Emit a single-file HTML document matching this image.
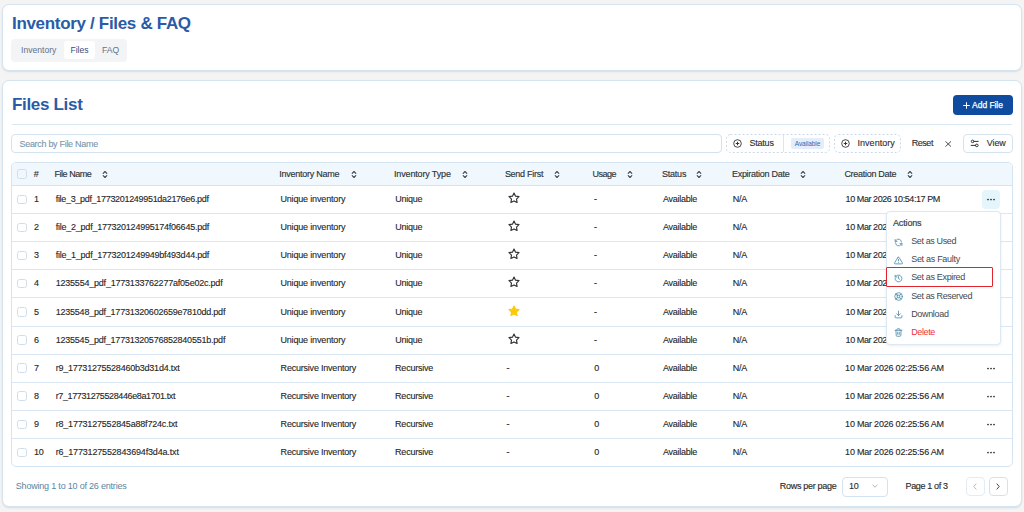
<!DOCTYPE html>
<html><head><meta charset="utf-8">
<style>
*{box-sizing:border-box;margin:0;padding:0}
html,body{width:1024px;height:512px;overflow:hidden;background:#f4f4f4;font-family:"Liberation Sans",sans-serif;color:#2b2b2b}
.abs{position:absolute}
.card{position:absolute;left:2px;width:1020px;background:#fff;border:1px solid #d4e4f1;border-radius:7px;box-shadow:0 1px 2px rgba(0,0,0,.1)}
.title{position:absolute;left:12px;font-weight:bold;color:#2a5ba7;font-size:17px;letter-spacing:-0.32px;white-space:nowrap}
.tabs{position:absolute;left:11px;top:39px;width:116px;height:23px;background:#f2f4f6;border-radius:4px}
.tab{position:absolute;top:2px;height:18px;line-height:18px;font-size:8.6px;color:#5f7386;white-space:nowrap}
.tab.on{background:#fff;color:#2e4f86;border-radius:3px;text-align:center}
.t9{font-size:9px;letter-spacing:-0.15px;white-space:nowrap;-webkit-text-stroke:0.1px currentColor}
.sep{position:absolute;left:12px;width:1000px;height:1px;background:#d9e7f3}
.btn-add{position:absolute;left:953px;top:95px;width:60px;height:20px;background:#0f4c9f;border-radius:4px;color:#fff;font-size:9px;font-weight:bold;line-height:21px;text-align:center;letter-spacing:-0.2px}
.input{position:absolute;left:11px;top:134px;width:711px;height:19px;border:1px solid #d3e2ef;border-radius:4px}
.dash{position:absolute;top:134px;height:19px;border:1px dashed #cfdeeb;border-radius:4px}
.table{position:absolute;left:11px;top:162px;width:1002px;height:305px;border:1px solid #d3e5f3;border-radius:5px;overflow:hidden}
.thead{position:absolute;left:0;top:0;width:100%;height:23px;background:#f0f8fd;border-bottom:1px solid #d3e5f3}
.row{position:absolute;left:0;width:100%;height:28px;border-bottom:1px solid #d9e8f4}
.cell{position:absolute;top:0;line-height:27.4px;font-size:9px;letter-spacing:-0.15px;white-space:nowrap;color:#262626;-webkit-text-stroke:0.12px #262626}
.th{position:absolute;top:0;line-height:23px;font-size:9px;letter-spacing:-0.2px;white-space:nowrap;color:#2d3338;-webkit-text-stroke:0.15px #2d3338}
.cb{position:absolute;width:9.5px;height:9.5px;border:1px solid #cfdeeb;border-radius:2.5px;background:transparent}
.sort{position:absolute;top:7px;width:6px;height:9px}
</style></head><body>

<div class="card" style="top:4px;height:67px">
</div>
<div class="title" style="top:14px">Inventory / Files &amp; FAQ</div>
<div class="tabs">
  <div class="tab" style="left:10px">Inventory</div>
  <div class="tab on" style="left:53px;width:31px">Files</div>
  <div class="tab" style="left:91px">FAQ</div>
</div>

<div class="card" style="top:80px;height:427px"></div>
<div class="title" style="top:95px">Files List</div>
<div class="btn-add"></div>
<svg class="abs" style="left:962.5px;top:101.5px" width="7" height="7" viewBox="0 0 7 7"><path d="M3.5 0.6v5.8M0.6 3.5h5.8" stroke="#fff" stroke-width="1" stroke-linecap="round"/></svg>
<div class="abs" style="left:972.1px;top:98px;line-height:14px;font-size:8.5px;color:#fff;-webkit-text-stroke:0.25px #fff;letter-spacing:-0.05px;white-space:nowrap">Add File</div>
<div class="sep" style="top:124px"></div>

<div class="input"><div class="abs t9" style="left:7.5px;top:0.5px;line-height:17px;color:#7896ab;letter-spacing:-0.3px">Search by File Name</div></div>

<svg class="abs" style="left:726px;top:134px" width="104" height="19"><rect x="0.5" y="0.5" width="103" height="18" rx="4" fill="none" stroke="#c9dbea" stroke-width="1" stroke-dasharray="2 2"/></svg>
<svg class="abs" style="left:733px;top:139px" width="9" height="9" viewBox="0 0 18 18"><circle cx="9" cy="9" r="7.6" fill="none" stroke="#333" stroke-width="1.8"/><path d="M9 6.3v5.4M6.3 9h5.4" stroke="#333" stroke-width="2" stroke-linecap="round"/></svg>
<div class="abs t9" style="left:749.4px;top:134px;line-height:19px;color:#2b2b2b;letter-spacing:-0.2px">Status</div>
<div class="abs" style="left:783px;top:135px;width:1px;height:17px;background:#dbe6ef"></div>
<div class="abs" style="left:791px;top:138px;width:33px;height:11px;background:#e4edf9;border-radius:2px;color:#3b66b0;font-size:6.5px;line-height:11px;text-align:center;letter-spacing:-0.1px">Available</div>
<svg class="abs" style="left:834px;top:134px" width="67" height="19"><rect x="0.5" y="0.5" width="66" height="18" rx="4" fill="none" stroke="#c9dbea" stroke-width="1" stroke-dasharray="2 2"/></svg>
<svg class="abs" style="left:841px;top:139px" width="9" height="9" viewBox="0 0 18 18"><circle cx="9" cy="9" r="7.6" fill="none" stroke="#333" stroke-width="1.8"/><path d="M9 6.3v5.4M6.3 9h5.4" stroke="#333" stroke-width="2" stroke-linecap="round"/></svg>
<div class="abs t9" style="left:857.5px;top:134px;line-height:19px;color:#2b2b2b;letter-spacing:0.03px">Inventory</div>
<div class="abs t9" style="left:911.7px;top:134px;line-height:19px;color:#2b2b2b;letter-spacing:-0.45px">Reset</div>
<svg class="abs" style="left:944.5px;top:140.5px" width="6.5" height="6" viewBox="0 0 6.5 6"><path d="M0.7 0.6L5.8 5.4M5.8 0.6L0.7 5.4" stroke="#3a3a3a" stroke-width="0.9" stroke-linecap="round"/></svg>
<div class="abs" style="left:963px;top:134px;width:50px;height:19px;border:1px solid #d3e2ef;border-radius:4px"></div>
<svg class="abs" style="left:970px;top:138px" width="10" height="10" viewBox="0 0 10 10"><circle cx="2.6" cy="3.4" r="1.3" fill="none" stroke="#333" stroke-width="1"/><path d="M3.9 3.4H8.2M1.2 7.4H5.5" stroke="#333" stroke-width="1" stroke-linecap="round"/><circle cx="6.8" cy="7.4" r="1.3" fill="none" stroke="#333" stroke-width="1"/></svg>
<div class="abs t9" style="left:986.8px;top:134px;line-height:19px;color:#2b2b2b;letter-spacing:-0.1px">View</div>

<div class="abs" style="left:15.8px;top:478px;line-height:16px;font-size:9px;white-space:nowrap;letter-spacing:-0.2px;color:#5985a2">Showing 1 to 10 of 26 entries</div>
<div class="abs t9" style="left:779.8px;top:478px;line-height:16px;color:#2b2b2b;letter-spacing:-0.3px;-webkit-text-stroke:0.15px #2b2b2b">Rows per page</div>
<div class="abs" style="left:842px;top:476.5px;width:46px;height:20px;border:1px solid #d3e2ef;border-radius:4px"></div>
<div class="abs t9" style="left:849px;top:478px;line-height:16px;color:#2b2b2b">10</div>
<svg class="abs" style="left:872px;top:484px" width="6" height="4" viewBox="0 0 6 4"><path d="M0.5 0.8L3 3.2L5.5 0.8" fill="none" stroke="#9aa8b4" stroke-width="0.8"/></svg>
<div class="abs t9" style="left:905.5px;top:478px;line-height:16px;color:#2b2b2b;letter-spacing:-0.36px;-webkit-text-stroke:0.15px #2b2b2b">Page 1 of 3</div>
<div class="abs" style="left:966px;top:477px;width:19px;height:19px;border:1px solid #e3ecf4;border-radius:4px"></div>
<svg class="abs" style="left:973px;top:483px" width="4" height="7" viewBox="0 0 4 7"><path d="M3.3 0.6L0.8 3.5L3.3 6.4" fill="none" stroke="#a9b4bd" stroke-width="0.9"/></svg>
<div class="abs" style="left:989px;top:477px;width:19px;height:19px;border:1px solid #d3e2ef;border-radius:4px"></div>
<svg class="abs" style="left:996px;top:483px" width="4" height="7" viewBox="0 0 4 7"><path d="M0.7 0.6L3.2 3.5L0.7 6.4" fill="none" stroke="#333" stroke-width="0.9"/></svg>


<div class="table">
  <div class="thead">
<div class="cb" style="left:5.2px;top:6px"></div>
<div class="th" style="left:21.7px;letter-spacing:0px">#</div>
<div class="th" style="left:42.5px;letter-spacing:-0.464px">File Name</div>
<svg class="sort" style="left:90.1px" viewBox="0 0 6 9"><path d="M1.2 3.3 L3 1.5 L4.8 3.3 M1.2 5.7 L3 7.5 L4.8 5.7" fill="none" stroke="#3a4652" stroke-width="1.1" stroke-linecap="round" stroke-linejoin="round"/></svg>
<div class="th" style="left:267.2px;letter-spacing:-0.256px">Inventory Name</div>
<svg class="sort" style="left:338.8px" viewBox="0 0 6 9"><path d="M1.2 3.3 L3 1.5 L4.8 3.3 M1.2 5.7 L3 7.5 L4.8 5.7" fill="none" stroke="#3a4652" stroke-width="1.1" stroke-linecap="round" stroke-linejoin="round"/></svg>
<div class="th" style="left:382.0px;letter-spacing:-0.151px">Inventory Type</div>
<svg class="sort" style="left:449.8px" viewBox="0 0 6 9"><path d="M1.2 3.3 L3 1.5 L4.8 3.3 M1.2 5.7 L3 7.5 L4.8 5.7" fill="none" stroke="#3a4652" stroke-width="1.1" stroke-linecap="round" stroke-linejoin="round"/></svg>
<div class="th" style="left:492.9px;letter-spacing:-0.279px">Send First</div>
<svg class="sort" style="left:542.2px" viewBox="0 0 6 9"><path d="M1.2 3.3 L3 1.5 L4.8 3.3 M1.2 5.7 L3 7.5 L4.8 5.7" fill="none" stroke="#3a4652" stroke-width="1.1" stroke-linecap="round" stroke-linejoin="round"/></svg>
<div class="th" style="left:580.4px;letter-spacing:-0.48px">Usage</div>
<svg class="sort" style="left:615.3px" viewBox="0 0 6 9"><path d="M1.2 3.3 L3 1.5 L4.8 3.3 M1.2 5.7 L3 7.5 L4.8 5.7" fill="none" stroke="#3a4652" stroke-width="1.1" stroke-linecap="round" stroke-linejoin="round"/></svg>
<div class="th" style="left:650.0px;letter-spacing:-0.223px">Status</div>
<svg class="sort" style="left:684.4px" viewBox="0 0 6 9"><path d="M1.2 3.3 L3 1.5 L4.8 3.3 M1.2 5.7 L3 7.5 L4.8 5.7" fill="none" stroke="#3a4652" stroke-width="1.1" stroke-linecap="round" stroke-linejoin="round"/></svg>
<div class="th" style="left:719.9px;letter-spacing:-0.259px">Expiration Date</div>
<svg class="sort" style="left:787.9px" viewBox="0 0 6 9"><path d="M1.2 3.3 L3 1.5 L4.8 3.3 M1.2 5.7 L3 7.5 L4.8 5.7" fill="none" stroke="#3a4652" stroke-width="1.1" stroke-linecap="round" stroke-linejoin="round"/></svg>
<div class="th" style="left:832.4px;letter-spacing:-0.286px">Creation Date</div>
<svg class="sort" style="left:894.5px" viewBox="0 0 6 9"><path d="M1.2 3.3 L3 1.5 L4.8 3.3 M1.2 5.7 L3 7.5 L4.8 5.7" fill="none" stroke="#3a4652" stroke-width="1.1" stroke-linecap="round" stroke-linejoin="round"/></svg>
</div>
<div class="row" style="top:23.0px">
<div class="cb" style="left:5.2px;top:8.5px"></div>
<div class="cell" style="left:22px;letter-spacing:-0.3px">1</div>
<div class="cell" style="left:43.7px;letter-spacing:-0.311px">file_3_pdf_1773201249951da2176e6.pdf</div>
<div class="cell" style="left:268.4px;letter-spacing:-0.162px">Unique inventory</div>
<div class="cell" style="left:383.3px;letter-spacing:-0.264px">Unique</div>
<div class="cell" style="left:651.0px;letter-spacing:-0.27px">Available</div>
<div class="cell" style="left:720.7px;letter-spacing:-0.251px">N/A</div>
<div class="cell" style="left:833.6px;letter-spacing:-0.426px">10 Mar 2026 10:54:17 PM</div>
<div class="cell" style="left:582px">-</div>
<svg class="abs" style="left:495.5px;top:6px" width="12" height="12" viewBox="0 0 24 24"><path d="M12 2l3.09 6.26L22 9.27l-5 4.87 1.18 6.88L12 17.77l-6.18 3.25L7 14.14 2 9.27l6.91-1.01L12 2z" fill="none" stroke="#333" stroke-width="2.3" stroke-linejoin="round"/></svg>
<div class="abs" style="left:970px;top:4px;width:18px;height:19px;border-radius:4px;background:#e5f5fc"><svg class="abs" style="left:5px;top:8px" width="8" height="3" viewBox="0 0 8 3"><circle cx="1" cy="1.5" r="0.85" fill="#222"/><circle cx="4" cy="1.5" r="0.85" fill="#222"/><circle cx="7" cy="1.5" r="0.85" fill="#222"/></svg></div>
</div>
<div class="row" style="top:51.13px">
<div class="cb" style="left:5.2px;top:8.5px"></div>
<div class="cell" style="left:22px;letter-spacing:-0.3px">2</div>
<div class="cell" style="left:43.7px;letter-spacing:-0.231px">file_2_pdf_177320124995174f06645.pdf</div>
<div class="cell" style="left:268.4px;letter-spacing:-0.162px">Unique inventory</div>
<div class="cell" style="left:383.3px;letter-spacing:-0.264px">Unique</div>
<div class="cell" style="left:651.0px;letter-spacing:-0.27px">Available</div>
<div class="cell" style="left:720.7px;letter-spacing:-0.251px">N/A</div>
<div class="cell" style="left:833.6px;letter-spacing:-0.426px">10 Mar 2026 10:54:17 PM</div>
<div class="cell" style="left:582px">-</div>
<svg class="abs" style="left:495.5px;top:6px" width="12" height="12" viewBox="0 0 24 24"><path d="M12 2l3.09 6.26L22 9.27l-5 4.87 1.18 6.88L12 17.77l-6.18 3.25L7 14.14 2 9.27l6.91-1.01L12 2z" fill="none" stroke="#333" stroke-width="2.3" stroke-linejoin="round"/></svg>
<div class="abs" style="left:970px;top:4px;width:18px;height:19px;border-radius:4px;background:transparent"><svg class="abs" style="left:5px;top:8px" width="8" height="3" viewBox="0 0 8 3"><circle cx="1" cy="1.5" r="0.85" fill="#222"/><circle cx="4" cy="1.5" r="0.85" fill="#222"/><circle cx="7" cy="1.5" r="0.85" fill="#222"/></svg></div>
</div>
<div class="row" style="top:79.26px">
<div class="cb" style="left:5.2px;top:8.5px"></div>
<div class="cell" style="left:22px;letter-spacing:-0.3px">3</div>
<div class="cell" style="left:43.7px;letter-spacing:-0.231px">file_1_pdf_1773201249949bf493d44.pdf</div>
<div class="cell" style="left:268.4px;letter-spacing:-0.162px">Unique inventory</div>
<div class="cell" style="left:383.3px;letter-spacing:-0.264px">Unique</div>
<div class="cell" style="left:651.0px;letter-spacing:-0.27px">Available</div>
<div class="cell" style="left:720.7px;letter-spacing:-0.251px">N/A</div>
<div class="cell" style="left:833.6px;letter-spacing:-0.426px">10 Mar 2026 10:54:17 PM</div>
<div class="cell" style="left:582px">-</div>
<svg class="abs" style="left:495.5px;top:6px" width="12" height="12" viewBox="0 0 24 24"><path d="M12 2l3.09 6.26L22 9.27l-5 4.87 1.18 6.88L12 17.77l-6.18 3.25L7 14.14 2 9.27l6.91-1.01L12 2z" fill="none" stroke="#333" stroke-width="2.3" stroke-linejoin="round"/></svg>
<div class="abs" style="left:970px;top:4px;width:18px;height:19px;border-radius:4px;background:transparent"><svg class="abs" style="left:5px;top:8px" width="8" height="3" viewBox="0 0 8 3"><circle cx="1" cy="1.5" r="0.85" fill="#222"/><circle cx="4" cy="1.5" r="0.85" fill="#222"/><circle cx="7" cy="1.5" r="0.85" fill="#222"/></svg></div>
</div>
<div class="row" style="top:107.39px">
<div class="cb" style="left:5.2px;top:8.5px"></div>
<div class="cell" style="left:22px;letter-spacing:-0.3px">4</div>
<div class="cell" style="left:43.7px;letter-spacing:-0.214px">1235554_pdf_1773133762277af05e02c.pdf</div>
<div class="cell" style="left:268.4px;letter-spacing:-0.162px">Unique inventory</div>
<div class="cell" style="left:383.3px;letter-spacing:-0.264px">Unique</div>
<div class="cell" style="left:651.0px;letter-spacing:-0.27px">Available</div>
<div class="cell" style="left:720.7px;letter-spacing:-0.251px">N/A</div>
<div class="cell" style="left:833.6px;letter-spacing:-0.426px">10 Mar 2026 10:54:17 PM</div>
<div class="cell" style="left:582px">-</div>
<svg class="abs" style="left:495.5px;top:6px" width="12" height="12" viewBox="0 0 24 24"><path d="M12 2l3.09 6.26L22 9.27l-5 4.87 1.18 6.88L12 17.77l-6.18 3.25L7 14.14 2 9.27l6.91-1.01L12 2z" fill="none" stroke="#333" stroke-width="2.3" stroke-linejoin="round"/></svg>
<div class="abs" style="left:970px;top:4px;width:18px;height:19px;border-radius:4px;background:transparent"><svg class="abs" style="left:5px;top:8px" width="8" height="3" viewBox="0 0 8 3"><circle cx="1" cy="1.5" r="0.85" fill="#222"/><circle cx="4" cy="1.5" r="0.85" fill="#222"/><circle cx="7" cy="1.5" r="0.85" fill="#222"/></svg></div>
</div>
<div class="row" style="top:135.52px">
<div class="cb" style="left:5.2px;top:8.5px"></div>
<div class="cell" style="left:22px;letter-spacing:-0.3px">5</div>
<div class="cell" style="left:43.7px;letter-spacing:-0.222px">1235548_pdf_17731320602659e7810dd.pdf</div>
<div class="cell" style="left:268.4px;letter-spacing:-0.162px">Unique inventory</div>
<div class="cell" style="left:383.3px;letter-spacing:-0.264px">Unique</div>
<div class="cell" style="left:651.0px;letter-spacing:-0.27px">Available</div>
<div class="cell" style="left:720.7px;letter-spacing:-0.251px">N/A</div>
<div class="cell" style="left:833.6px;letter-spacing:-0.426px">10 Mar 2026 10:54:17 PM</div>
<div class="cell" style="left:582px">-</div>
<svg class="abs" style="left:495.5px;top:6px" width="12" height="12" viewBox="0 0 24 24"><path d="M12 2l3.09 6.26L22 9.27l-5 4.87 1.18 6.88L12 17.77l-6.18 3.25L7 14.14 2 9.27l6.91-1.01L12 2z" fill="#fbcb0a" stroke="#fbcb0a" stroke-width="2.3" stroke-linejoin="round"/></svg>
<div class="abs" style="left:970px;top:4px;width:18px;height:19px;border-radius:4px;background:transparent"><svg class="abs" style="left:5px;top:8px" width="8" height="3" viewBox="0 0 8 3"><circle cx="1" cy="1.5" r="0.85" fill="#222"/><circle cx="4" cy="1.5" r="0.85" fill="#222"/><circle cx="7" cy="1.5" r="0.85" fill="#222"/></svg></div>
</div>
<div class="row" style="top:163.65px">
<div class="cb" style="left:5.2px;top:8.5px"></div>
<div class="cell" style="left:22px;letter-spacing:-0.3px">6</div>
<div class="cell" style="left:43.7px;letter-spacing:-0.222px">1235545_pdf_17731320576852840551b.pdf</div>
<div class="cell" style="left:268.4px;letter-spacing:-0.162px">Unique inventory</div>
<div class="cell" style="left:383.3px;letter-spacing:-0.264px">Unique</div>
<div class="cell" style="left:651.0px;letter-spacing:-0.27px">Available</div>
<div class="cell" style="left:720.7px;letter-spacing:-0.251px">N/A</div>
<div class="cell" style="left:833.6px;letter-spacing:-0.426px">10 Mar 2026 10:54:17 PM</div>
<div class="cell" style="left:582px">-</div>
<svg class="abs" style="left:495.5px;top:6px" width="12" height="12" viewBox="0 0 24 24"><path d="M12 2l3.09 6.26L22 9.27l-5 4.87 1.18 6.88L12 17.77l-6.18 3.25L7 14.14 2 9.27l6.91-1.01L12 2z" fill="none" stroke="#333" stroke-width="2.3" stroke-linejoin="round"/></svg>
<div class="abs" style="left:970px;top:4px;width:18px;height:19px;border-radius:4px;background:transparent"><svg class="abs" style="left:5px;top:8px" width="8" height="3" viewBox="0 0 8 3"><circle cx="1" cy="1.5" r="0.85" fill="#222"/><circle cx="4" cy="1.5" r="0.85" fill="#222"/><circle cx="7" cy="1.5" r="0.85" fill="#222"/></svg></div>
</div>
<div class="row" style="top:191.78px">
<div class="cb" style="left:5.2px;top:8.5px"></div>
<div class="cell" style="left:22px;letter-spacing:-0.3px">7</div>
<div class="cell" style="left:43.7px;letter-spacing:-0.223px">r9_17731275528460b3d31d4.txt</div>
<div class="cell" style="left:268.6px;letter-spacing:-0.213px">Recursive Inventory</div>
<div class="cell" style="left:383.1px;letter-spacing:-0.227px">Recursive</div>
<div class="cell" style="left:651.0px;letter-spacing:-0.27px">Available</div>
<div class="cell" style="left:720.7px;letter-spacing:-0.251px">N/A</div>
<div class="cell" style="left:833.1px;letter-spacing:-0.212px">10 Mar 2026 02:25:56 AM</div>
<div class="cell" style="left:582.3px">0</div>
<div class="cell" style="left:494.5px">-</div>
<div class="abs" style="left:970px;top:4px;width:18px;height:19px;border-radius:4px;background:transparent"><svg class="abs" style="left:5px;top:8px" width="8" height="3" viewBox="0 0 8 3"><circle cx="1" cy="1.5" r="0.85" fill="#222"/><circle cx="4" cy="1.5" r="0.85" fill="#222"/><circle cx="7" cy="1.5" r="0.85" fill="#222"/></svg></div>
</div>
<div class="row" style="top:219.91px">
<div class="cb" style="left:5.2px;top:8.5px"></div>
<div class="cell" style="left:22px;letter-spacing:-0.3px">8</div>
<div class="cell" style="left:43.7px;letter-spacing:-0.386px">r7_17731275528446e8a1701.txt</div>
<div class="cell" style="left:268.6px;letter-spacing:-0.213px">Recursive Inventory</div>
<div class="cell" style="left:383.1px;letter-spacing:-0.227px">Recursive</div>
<div class="cell" style="left:651.0px;letter-spacing:-0.27px">Available</div>
<div class="cell" style="left:720.7px;letter-spacing:-0.251px">N/A</div>
<div class="cell" style="left:833.1px;letter-spacing:-0.212px">10 Mar 2026 02:25:56 AM</div>
<div class="cell" style="left:582.3px">0</div>
<div class="cell" style="left:494.5px">-</div>
<div class="abs" style="left:970px;top:4px;width:18px;height:19px;border-radius:4px;background:transparent"><svg class="abs" style="left:5px;top:8px" width="8" height="3" viewBox="0 0 8 3"><circle cx="1" cy="1.5" r="0.85" fill="#222"/><circle cx="4" cy="1.5" r="0.85" fill="#222"/><circle cx="7" cy="1.5" r="0.85" fill="#222"/></svg></div>
</div>
<div class="row" style="top:248.04px">
<div class="cb" style="left:5.2px;top:8.5px"></div>
<div class="cell" style="left:22px;letter-spacing:-0.3px">9</div>
<div class="cell" style="left:43.7px;letter-spacing:-0.193px">r8_1773127552845a88f724c.txt</div>
<div class="cell" style="left:268.6px;letter-spacing:-0.213px">Recursive Inventory</div>
<div class="cell" style="left:383.1px;letter-spacing:-0.227px">Recursive</div>
<div class="cell" style="left:651.0px;letter-spacing:-0.27px">Available</div>
<div class="cell" style="left:720.7px;letter-spacing:-0.251px">N/A</div>
<div class="cell" style="left:833.1px;letter-spacing:-0.212px">10 Mar 2026 02:25:56 AM</div>
<div class="cell" style="left:582.3px">0</div>
<div class="cell" style="left:494.5px">-</div>
<div class="abs" style="left:970px;top:4px;width:18px;height:19px;border-radius:4px;background:transparent"><svg class="abs" style="left:5px;top:8px" width="8" height="3" viewBox="0 0 8 3"><circle cx="1" cy="1.5" r="0.85" fill="#222"/><circle cx="4" cy="1.5" r="0.85" fill="#222"/><circle cx="7" cy="1.5" r="0.85" fill="#222"/></svg></div>
</div>
<div class="row" style="top:276.17px">
<div class="cb" style="left:5.2px;top:8.5px"></div>
<div class="cell" style="left:22px;letter-spacing:-0.3px">10</div>
<div class="cell" style="left:43.7px;letter-spacing:-0.164px">r6_1773127552843694f3d4a.txt</div>
<div class="cell" style="left:268.6px;letter-spacing:-0.213px">Recursive Inventory</div>
<div class="cell" style="left:383.1px;letter-spacing:-0.227px">Recursive</div>
<div class="cell" style="left:651.0px;letter-spacing:-0.27px">Available</div>
<div class="cell" style="left:720.7px;letter-spacing:-0.251px">N/A</div>
<div class="cell" style="left:833.1px;letter-spacing:-0.212px">10 Mar 2026 02:25:56 AM</div>
<div class="cell" style="left:582.3px">0</div>
<div class="cell" style="left:494.5px">-</div>
<div class="abs" style="left:970px;top:4px;width:18px;height:19px;border-radius:4px;background:transparent"><svg class="abs" style="left:5px;top:8px" width="8" height="3" viewBox="0 0 8 3"><circle cx="1" cy="1.5" r="0.85" fill="#222"/><circle cx="4" cy="1.5" r="0.85" fill="#222"/><circle cx="7" cy="1.5" r="0.85" fill="#222"/></svg></div>
</div>
</div>


<div class="abs" style="left:886px;top:211px;width:115px;height:134px;background:#fff;border:1px solid #dce8f2;border-radius:4px;box-shadow:0 1px 3px rgba(0,0,0,.08)"></div>
<div class="abs" style="left:893.0px;top:216px;line-height:14px;font-size:9px;color:#3a3f44;-webkit-text-stroke:0.2px #3a3f44;letter-spacing:-0.152px;white-space:nowrap">Actions</div>
<div class="abs" style="left:911.2px;top:234px;line-height:14px;font-size:9px;color:#45494e;letter-spacing:-0.372px;white-space:nowrap">Set as Used</div>
<div class="abs" style="left:911.2px;top:252px;line-height:14px;font-size:9px;color:#45494e;letter-spacing:-0.294px;white-space:nowrap">Set as Faulty</div>
<div class="abs" style="left:911.2px;top:270px;line-height:14px;font-size:9px;color:#45494e;letter-spacing:-0.341px;white-space:nowrap">Set as Expired</div>
<div class="abs" style="left:911.2px;top:289px;line-height:14px;font-size:9px;color:#45494e;letter-spacing:-0.381px;white-space:nowrap">Set as Reserved</div>
<div class="abs" style="left:911.2px;top:307px;line-height:14px;font-size:9px;color:#45494e;letter-spacing:-0.332px;white-space:nowrap">Download</div>
<div class="abs" style="left:911.2px;top:325px;line-height:14px;font-size:9px;color:#ee3342;letter-spacing:-0.384px;white-space:nowrap">Delete</div>
<svg class="abs" style="left:894px;top:238px" width="9" height="9" viewBox="0 0 24 24" fill="none" stroke="#4b8aa8" stroke-width="2.2" stroke-linecap="round" stroke-linejoin="round"><path d="M20 11A8 8 0 0 0 5.5 6.5L3 9M3 4v5h5"/><path d="M4 13a8 8 0 0 0 14.5 4.5L21 15M21 20v-5h-5"/></svg>
<svg class="abs" style="left:894px;top:256px" width="9" height="9" viewBox="0 0 24 24" fill="none" stroke="#4b8aa8" stroke-width="2.2" stroke-linecap="round" stroke-linejoin="round"><path d="M10.3 3.9L1.8 18a2 2 0 0 0 1.7 3h17a2 2 0 0 0 1.7-3L13.7 3.9a2 2 0 0 0-3.4 0z"/><path d="M12 9v4M12 17h.01"/></svg>
<svg class="abs" style="left:894px;top:274px" width="9" height="9" viewBox="0 0 24 24" fill="none" stroke="#4b8aa8" stroke-width="2.2" stroke-linecap="round" stroke-linejoin="round"><path d="M3 12a9 9 0 1 0 3-6.7L3 8M3 3v5h5"/><path d="M12 7v5l3 2"/></svg>
<svg class="abs" style="left:894px;top:292px" width="9" height="9" viewBox="0 0 24 24" fill="none" stroke="#4b8aa8" stroke-width="2.2" stroke-linecap="round" stroke-linejoin="round"><circle cx="12" cy="12" r="10"/><rect x="8.5" y="8.5" width="7" height="7" rx="0.5"/><path d="M4.9 4.9l3.6 3.6M15.5 8.5l3.6-3.6M15.5 15.5l3.6 3.6M8.5 15.5l-3.6 3.6"/></svg>
<svg class="abs" style="left:894px;top:310px" width="9" height="9" viewBox="0 0 24 24" fill="none" stroke="#4b8aa8" stroke-width="2.2" stroke-linecap="round" stroke-linejoin="round"><path d="M21 15v4a2 2 0 0 1-2 2H5a2 2 0 0 1-2-2v-4"/><path d="M7 10l5 5 5-5M12 15V3"/></svg>
<svg class="abs" style="left:894px;top:328px" width="9" height="9" viewBox="0 0 24 24" fill="none" stroke="#4b8aa8" stroke-width="2.2" stroke-linecap="round" stroke-linejoin="round"><path d="M3 6h18M8 6V4a2 2 0 0 1 2-2h4a2 2 0 0 1 2 2v2M19 6l-1 14a2 2 0 0 1-2 2H8a2 2 0 0 1-2-2L5 6"/><path d="M10 11v6M14 11v6"/></svg>
<div class="abs" style="left:886px;top:267px;width:107px;height:20px;border:1.5px solid #e0262c;border-radius:1px"></div>
</body></html>
